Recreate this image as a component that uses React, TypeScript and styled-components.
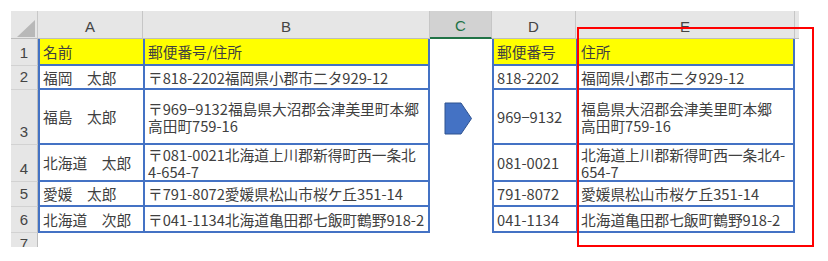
import React from "react";
import styled, { createGlobalStyle } from "styled-components";

const GlobalStyle = createGlobalStyle`
  html, body {
    margin: 0;
    padding: 0;
    background: #ffffff;
    overflow: hidden;
  }
`;

const BLUE = "#4472c4";

const Page = styled.div`
  position: relative;
  padding: 11px 0 0 11px;
  height: 247px;
  box-sizing: border-box;
  overflow: hidden;
`;

const Sheet = styled.div`
  display: grid;
  grid-template-columns: 27px 105px 287px 62px 84px 219px 4px;
  grid-template-rows: 28px 27px 24px 55px 37px 25px 26px 24px;
  width: max-content;
  font-family: "Noto Sans CJK JP", "Liberation Sans", sans-serif;
`;

const Corner = styled.div`
  position: relative;
  background: #e6e6e6;
  border-right: 1px solid #c8c8c8;
  border-bottom: 1px solid #bdbdbd;
  box-sizing: border-box;

  &::after {
    content: "";
    position: absolute;
    left: 6px;
    top: 9px;
    width: 18px;
    height: 17px;
    background: #b8b8b8;
    clip-path: polygon(100% 0, 100% 100%, 0 100%);
  }
`;

const ColHead = styled.div<{ $selected?: boolean; $blank?: boolean }>`
  display: flex;
  align-items: center;
  justify-content: center;
  box-sizing: border-box;
  background: ${(p) => (p.$selected ? "#d2d2d2" : "#e6e6e6")};
  color: ${(p) => (p.$selected ? "#217346" : "#444444")};
  border-right: ${(p) => (p.$blank ? "none" : "1px solid #c6c6c6")};
  border-bottom: ${(p) => (p.$selected ? "2px solid #217346" : "1px solid #bdbdbd")};
  font-family: "Liberation Sans", Arial, sans-serif;
  font-size: 15px;
  padding-top: 3px;
`;

const RowHead = styled.div`
  display: flex;
  align-items: flex-end;
  justify-content: center;
  box-sizing: border-box;
  background: #e6e6e6;
  border-right: 1px solid #bdbdbd;
  border-bottom: 1px solid #d2d2d2;
  color: #444444;
  font-family: "Liberation Sans", Arial, sans-serif;
  font-size: 15px;
  line-height: 24px;
`;

const Cell = styled.div<{ $yellow?: boolean; $left?: boolean; $right?: boolean; $bottom?: boolean }>`
  display: flex;
  align-items: center;
  box-sizing: border-box;
  padding-left: 3px;
  background: ${(p) => (p.$yellow ? "#ffff00" : "#ffffff")};
  border-left: ${(p) => (p.$left ? `2px solid ${BLUE}` : "none")};
  border-right: ${(p) => (p.$right ? `2px solid ${BLUE}` : "none")};
  border-bottom: ${(p) => (p.$bottom ? `2px solid ${BLUE}` : "none")};
  color: #404040;
  font-size: 14.7px;
  line-height: 17px;
  white-space: nowrap;
`;

const GapCell = styled.div<{ $arrow?: boolean }>`
  display: flex;
  align-items: flex-start;
  padding: ${(p) => (p.$arrow ? "12px 0 0 14px" : "0")};
  background: #ffffff;
`;

const Highlight = styled.div`
  position: absolute;
  left: 577px;
  top: 27px;
  width: 237px;
  height: 220px;
  box-sizing: border-box;
  border: 2px solid #ff0000;
  pointer-events: none;
`;

const Arrow = () => (
  <svg width="29" height="33" viewBox="0 0 29 33">
    <polygon points="1,1 17,1 27.5,16.5 17,32 1,32" fill="#4472c4" stroke="#2f528f" strokeWidth="1" />
  </svg>
);

type Row = {
  n: string;
  name: React.ReactNode;
  full: React.ReactNode;
  zip: string;
  addr: React.ReactNode;
};

const rows: Row[] = [
  { n: "2", name: "福岡　太郎", full: "〒818-2202福岡県小郡市二タ929-12", zip: "818-2202", addr: "福岡県小郡市二タ929-12" },
  {
    n: "3",
    name: "福島　太郎",
    full: (
      <span>
        〒969−9132福島県大沼郡会津美里町本郷
        <br />
        高田町759-16
      </span>
    ),
    zip: "969−9132",
    addr: (
      <span>
        福島県大沼郡会津美里町本郷
        <br />
        高田町759-16
      </span>
    ),
  },
  {
    n: "4",
    name: "北海道　太郎",
    full: (
      <span>
        〒081-0021北海道上川郡新得町西一条北
        <br />
        4-654-7
      </span>
    ),
    zip: "081-0021",
    addr: (
      <span>
        北海道上川郡新得町西一条北4-
        <br />
        654-7
      </span>
    ),
  },
  { n: "5", name: "愛媛　太郎", full: "〒791-8072愛媛県松山市桜ケ丘351-14", zip: "791-8072", addr: "愛媛県松山市桜ケ丘351-14" },
  { n: "6", name: "北海道　次郎", full: "〒041-1134北海道亀田郡七飯町鶴野918-2", zip: "041-1134", addr: "北海道亀田郡七飯町鶴野918-2" },
];

const App = () => (
  <Page>
    <GlobalStyle />
    <Sheet>
      <Corner />
      <ColHead>A</ColHead>
      <ColHead>B</ColHead>
      <ColHead $selected>C</ColHead>
      <ColHead>D</ColHead>
      <ColHead>E</ColHead>
      <ColHead $blank />

      <RowHead>1</RowHead>
      <Cell $yellow $left $bottom>名前</Cell>
      <Cell $yellow $left $right $bottom>郵便番号/住所</Cell>
      <GapCell />
      <Cell $yellow $left $bottom>郵便番号</Cell>
      <Cell $yellow $left $right $bottom>住所</Cell>
      <GapCell />

      {rows.map((r) => (
        <React.Fragment key={r.n}>
          <RowHead>{r.n}</RowHead>
          <Cell $left $bottom>{r.name}</Cell>
          <Cell $left $right $bottom>{r.full}</Cell>
          <GapCell $arrow={r.n === "3"}>{r.n === "3" && <Arrow />}</GapCell>
          <Cell $left $bottom>{r.zip}</Cell>
          <Cell $left $right $bottom>{r.addr}</Cell>
          <GapCell />
        </React.Fragment>
      ))}

      <RowHead>7</RowHead>
      <GapCell />
      <GapCell />
      <GapCell />
      <GapCell />
      <GapCell />
      <GapCell />
    </Sheet>
    <Highlight />
  </Page>
);

export default App;
